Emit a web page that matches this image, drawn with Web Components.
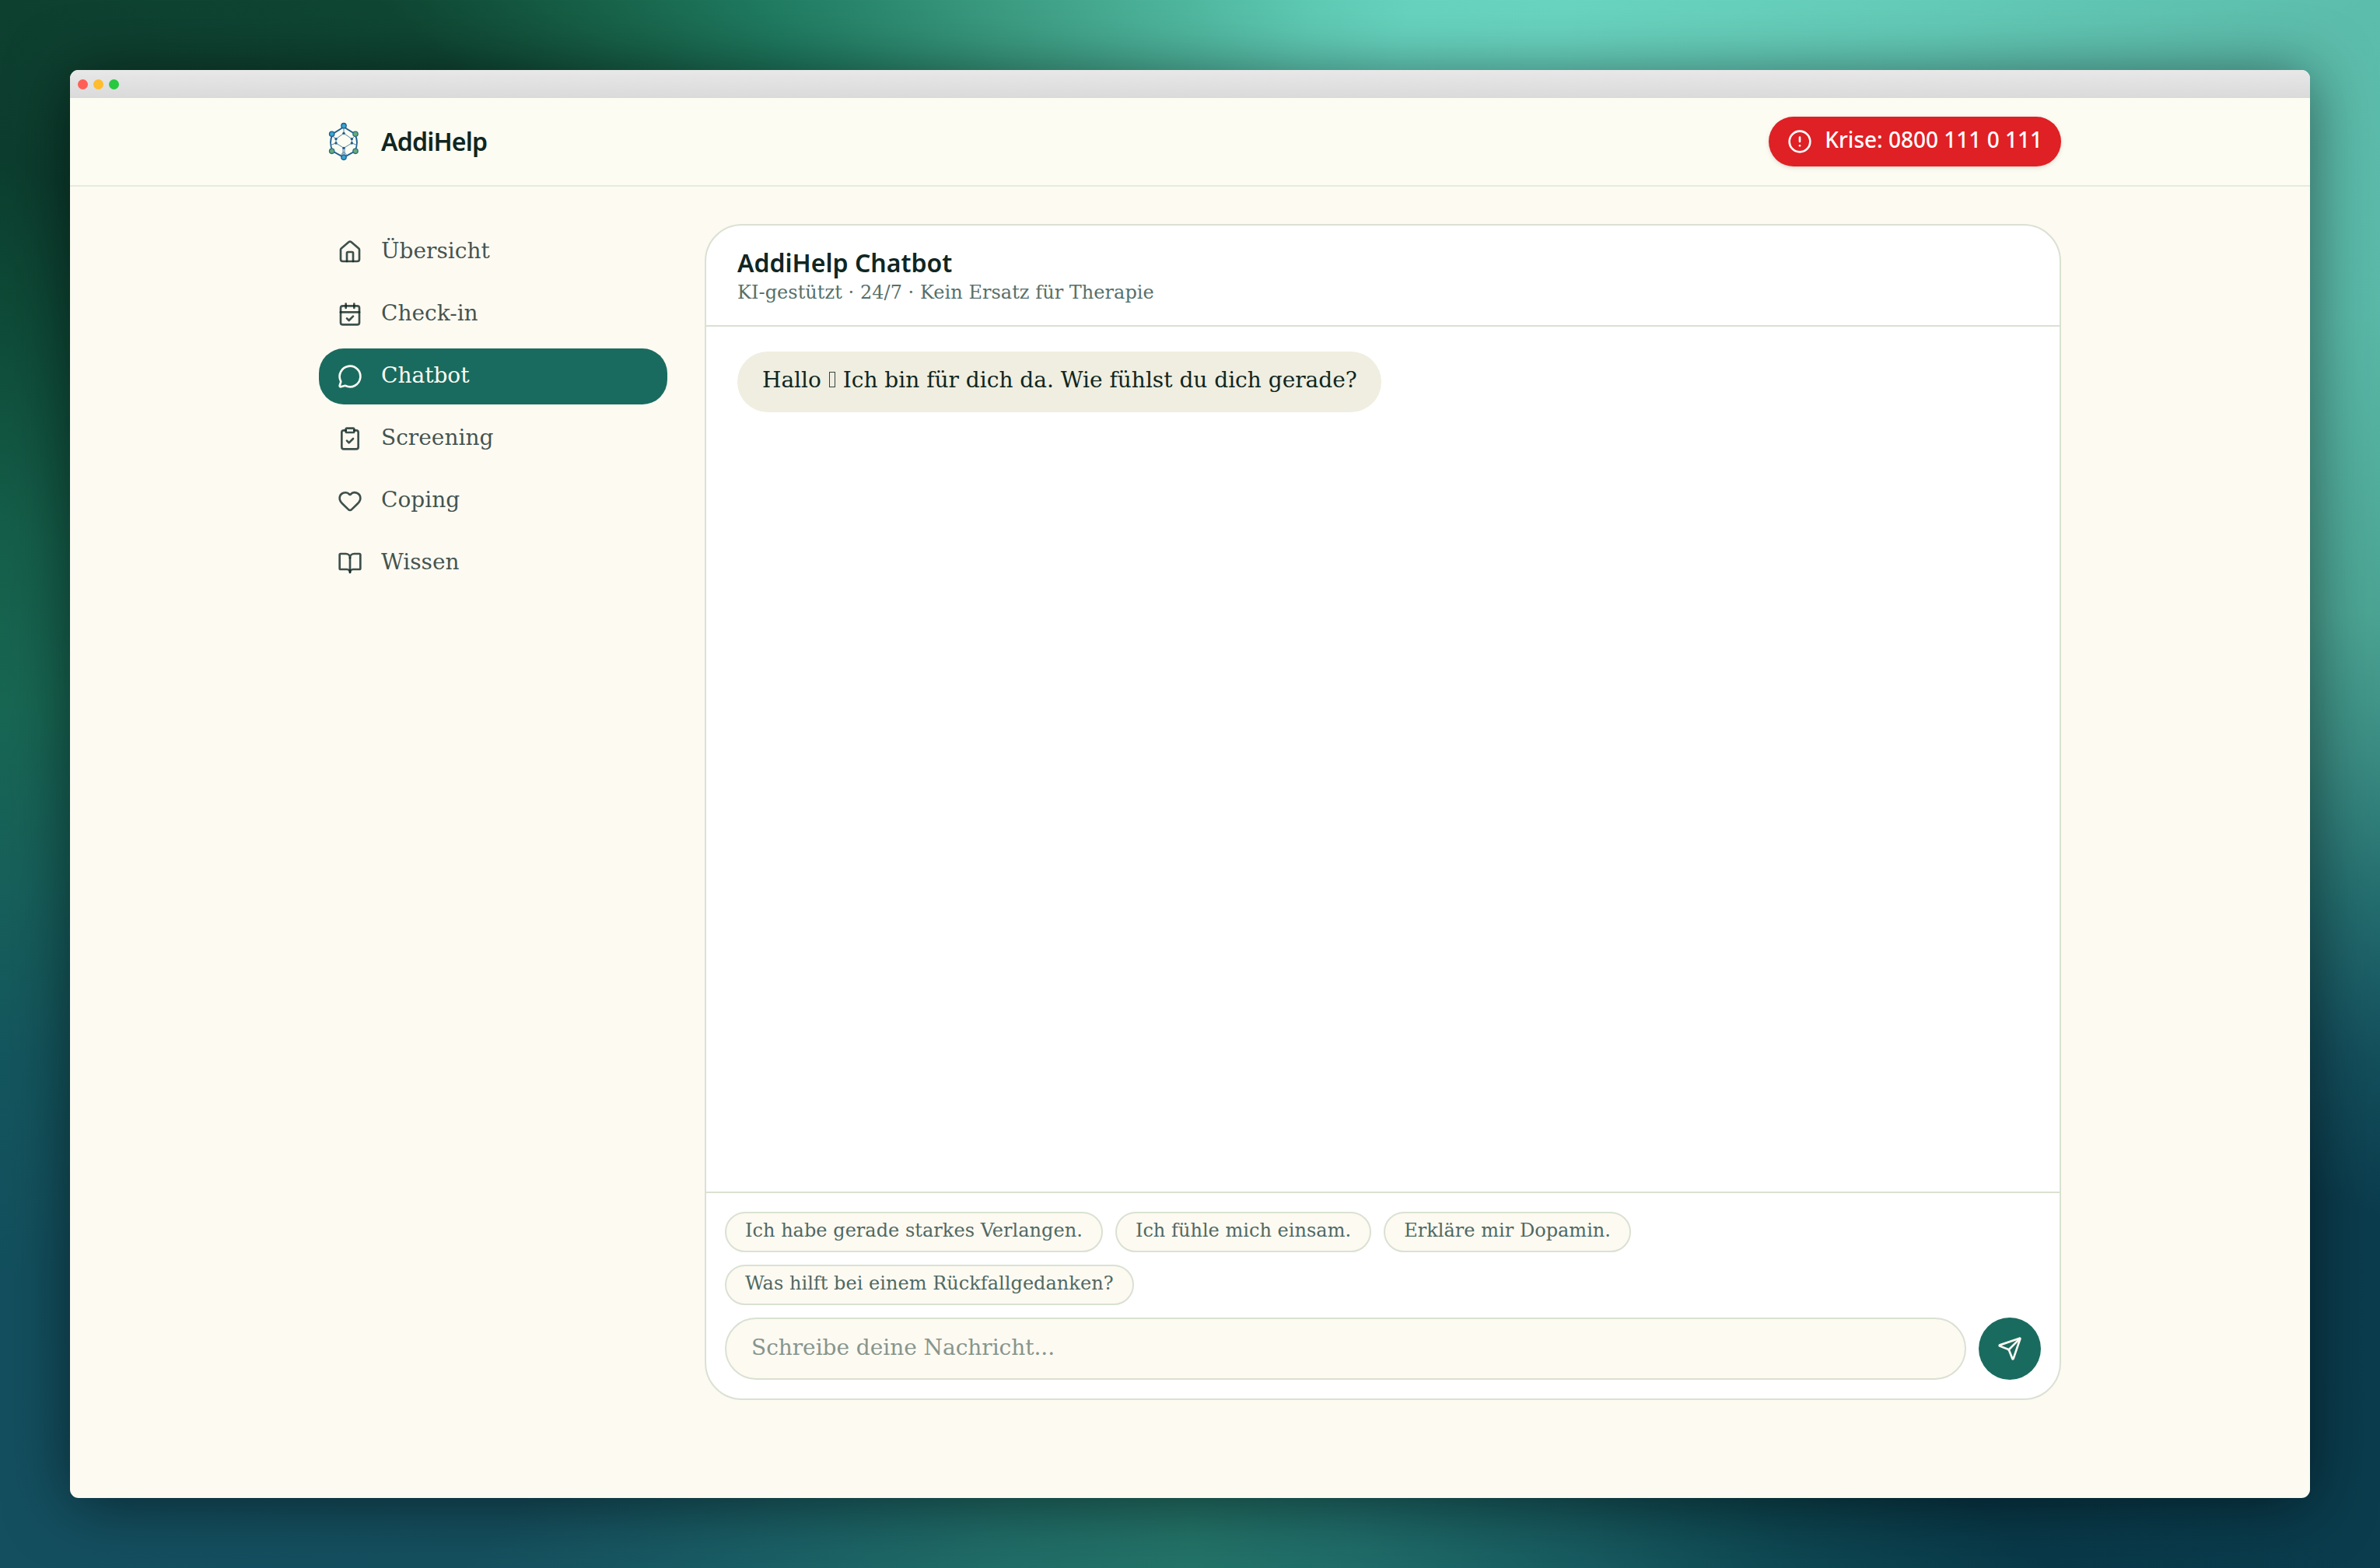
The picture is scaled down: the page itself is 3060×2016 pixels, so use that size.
<!DOCTYPE html>
<html lang="de">
<head>
<meta charset="utf-8">
<title>AddiHelp</title>
<style>
  html, body { margin: 0; height: 100%; }
  body { font-family: "DejaVu Serif", serif; color: #0f2622; }
</style>
</head>
<body>
<desktop-stage>
  <browser-window>
    <app-header>
      <crisis-pill slot="action">Krise: 0800 111 0 111</crisis-pill>
    </app-header>
    <app-main>
      <side-nav slot="nav">
        <nav-item icon="home">Übersicht</nav-item>
        <nav-item icon="calendar">Check-in</nav-item>
        <nav-item icon="message" active>Chatbot</nav-item>
        <nav-item icon="clipboard">Screening</nav-item>
        <nav-item icon="heart">Coping</nav-item>
        <nav-item icon="book">Wissen</nav-item>
      </side-nav>
      <chat-card>
        <span slot="title">AddiHelp Chatbot</span>
        <span slot="subtitle">KI-gestützt · 24/7 · Kein Ersatz für Therapie</span>
        <chat-bubble>Hallo <glyph-box>👋</glyph-box> Ich bin für dich da. Wie fühlst du dich gerade?</chat-bubble>
        <prompt-chip slot="chips">Ich habe gerade starkes Verlangen.</prompt-chip>
        <prompt-chip slot="chips">Ich fühle mich einsam.</prompt-chip>
        <prompt-chip slot="chips">Erkläre mir Dopamin.</prompt-chip>
        <prompt-chip slot="chips">Was hilft bei einem Rückfallgedanken?</prompt-chip>
        <chat-composer slot="composer">Schreibe deine Nachricht...</chat-composer>
      </chat-card>
    </app-main>
  </browser-window>
</desktop-stage>

<script>
const ICONS = {
  home: '<path d="M15 21v-8a1 1 0 0 0-1-1h-4a1 1 0 0 0-1 1v8"/><path d="M3 10a2 2 0 0 1 .709-1.528l7-6a2 2 0 0 1 2.582 0l7 6A2 2 0 0 1 21 10v9a2 2 0 0 1-2 2H5a2 2 0 0 1-2-2z"/>',
  calendar: '<path d="M8 2v4"/><path d="M16 2v4"/><rect width="18" height="18" x="3" y="4" rx="2"/><path d="M3 10h18"/><path d="m9 16 2 2 4-4"/>',
  message: '<path d="M2.992 16.342a2 2 0 0 1 .094 1.167l-1.065 3.29a1 1 0 0 0 1.236 1.168l3.413-.998a2 2 0 0 1 1.099.092 10 10 0 1 0-4.777-4.719"/>',
  clipboard: '<rect width="8" height="4" x="8" y="2" rx="1" ry="1"/><path d="M16 4h2a2 2 0 0 1 2 2v14a2 2 0 0 1-2 2H6a2 2 0 0 1-2-2V6a2 2 0 0 1 2-2h2"/><path d="m9 14 2 2 4-4"/>',
  heart: '<path d="M2 9.5a5.5 5.5 0 0 1 9.591-3.676.56.56 0 0 0 .818 0A5.49 5.49 0 0 1 22 9.5c0 2.29-1.5 4-3 5.5l-5.492 5.313a2 2 0 0 1-3 .019L5 15c-1.5-1.5-3-3.2-3-5.5"/>',
  book: '<path d="M12 7v14"/><path d="M3 18a1 1 0 0 1-1-1V4a1 1 0 0 1 1-1h5a4 4 0 0 1 4 4 4 4 0 0 1 4-4h5a1 1 0 0 1 1 1v13a1 1 0 0 1-1 1h-6a3 3 0 0 0-3 3 3 3 0 0 0-3-3z"/>',
  alert: '<circle cx="12" cy="12" r="10"/><path d="M12 8v4"/><path d="M12 16h.01"/>',
  send: '<path d="M14.536 21.686a.5.5 0 0 0 .937-.024l6.5-19a.496.496 0 0 0-.635-.635l-19 6.5a.5.5 0 0 0-.024.937l7.93 3.18a2 2 0 0 1 1.112 1.11z"/><path d="m21.854 2.147-10.94 10.939"/>'
};
const icon = name => `<svg width="32" height="32" viewBox="0 0 24 24" fill="none" stroke="currentColor" stroke-width="2" stroke-linecap="round" stroke-linejoin="round" aria-hidden="true">${ICONS[name]}</svg>`;

const define = (tag, render) => customElements.define(tag, class extends HTMLElement {
  constructor() { super(); this.attachShadow({ mode: 'open' }); }
  connectedCallback() {
    this.shadowRoot.innerHTML = '<style>*{box-sizing:border-box}:host{box-sizing:border-box}svg{display:block;flex:none}</style>' + render(this);
  }
});

define('desktop-stage', () => `
<style>
  :host { display: flex; width: 3060px; height: 2016px; padding: 90px; overflow: hidden;
    background: conic-gradient(#50b79f 0deg, #5fcab4 9deg, #67d3bf 16deg, #69d4c0 26deg, #67d0bc 35deg, #63cab7 45deg, #5dbdac 56.6deg, #5ab9a8 68deg, #4ca594 81.6deg, #3a8b82 88.8deg, #236c6e 96deg, #144f5c 103deg, #0b3c4d 110deg, #0a3c4d 123.4deg, #093949 132.3deg, #0d4550 141deg, #175a5f 152.7deg, #1f6b69 167deg, #237368 180deg, #206c67 194.6deg, #1a5f65 208.8deg, #154f5e 223deg, #144f60 236.6deg, #134f5e 247deg, #14565e 256.8deg, #17605b 265deg, #186753 274deg, #155f4a 282deg, #0e4a37 292deg, #0c3d2e 298deg, #0e4030 303.4deg, #0f4633 314deg, #176047 322deg, #1f7a60 331.2deg, #3a9a80 345.5deg, #50b79f 360deg); }
</style><slot></slot>`);

define('browser-window', () => `
<style>
  :host { display: flex; flex-direction: column; flex: 1; border-radius: 11px; overflow: hidden; background: #fdfaf2; box-shadow: 0 6px 80px rgba(0,0,0,.52); }
  .bar { display: flex; align-items: center; gap: 7px; height: 36px; padding: 0 10px; background: linear-gradient(#e8e8e8, #dadada); }
  i { width: 13px; height: 13px; border-radius: 50%; background: #ff5f57; }
  i:nth-child(2) { background: #febc2e; }
  i:nth-child(3) { background: #28c840; }
</style>
<div class="bar"><i></i><i></i><i></i></div><slot></slot>`);

define('app-header', () => `
<style>
  :host { display: flex; justify-content: center; height: 114px; border-bottom: 2px solid #e5ebe0; background: #fcfcf2; }
  .inner { display: flex; align-items: center; justify-content: space-between; width: 2304px; padding: 0 32px; }
  .brand { display: flex; align-items: center; gap: 16px; font: 600 32px/48px "Noto Sans", sans-serif; letter-spacing: -.8px; }
</style>
<div class="inner">
  <div class="brand">
    <svg width="64" height="64" viewBox="0 0 192 192" fill="none" stroke="#1d5f8e" aria-hidden="true">
      <path stroke-width="5.5" d="M96 40 54 66Q36 101 54 134L96 157 138 134Q156 101 138 66Z"/>
      <path stroke-width="2.6" stroke="#3b7199" d="M96 64 127 86V102L96 121 66 102V86ZM96 64V40M66 86 50 72M127 86 141 72M66 102 46 109M127 102 146 109M93 121V150M99 121V150M84 148 96 136 108 148"/>
      <g fill="#1d5f8e" stroke="none"><circle cx="96" cy="64" r="5"/><circle cx="66" cy="86" r="5"/><circle cx="127" cy="86" r="5"/><circle cx="66" cy="102" r="5"/><circle cx="127" cy="102" r="5"/><circle cx="96" cy="121" r="5"/></g>
      <g fill="#39a4d4" stroke-width="4"><circle cx="96" cy="35" r="9.5"/><circle cx="50" cy="67" r="9.5"/><circle cx="96" cy="157" r="9.5"/></g>
      <g fill="#67ac78" stroke="#2b6f86" stroke-width="4"><circle cx="141" cy="67" r="9.5"/><circle cx="50" cy="133" r="9.5"/><circle cx="141" cy="133" r="9.5"/></g>
    </svg>
    <span>AddiHelp</span>
  </div>
  <slot name="action"></slot>
</div>`);

define('crisis-pill', () => `
<style>
  :host { display: flex; align-items: center; gap: 16px; height: 64px; padding: 0 24px; border-radius: 32px; background: #df2025; color: #fff; font: 500 28px/40px "Noto Sans", sans-serif; box-shadow: 0 2px 6px rgba(0,0,0,.1), 0 2px 4px -2px rgba(0,0,0,.1); white-space: nowrap; }
  span { padding-bottom: 6px; }
</style>${icon('alert')}<span><slot></slot></span>`);

define('app-main', () => `
<style>
  :host { display: flex; justify-content: center; }
  .inner { display: grid; grid-template-columns: 448px 1fr; gap: 48px; width: 2304px; padding: 48px 32px; align-items: start; }
</style><div class="inner"><slot name="nav"></slot><slot></slot></div>`);

define('side-nav', () => `<style>:host { display: flex; flex-direction: column; gap: 8px; }</style><slot></slot>`);

define('nav-item', el => `
<style>
  :host { display: flex; align-items: center; gap: 24px; height: 72px; padding: 0 24px; border-radius: 32px; font-size: 28px; line-height: 40px; color: rgba(15,38,34,.8); }
  :host([active]) { background: #1a6b5f; color: #fdfbf3; }
  span { padding-bottom: 2px; }
</style>${icon(el.getAttribute('icon'))}<span><slot></slot></span>`);

define('chat-card', () => `
<style>
  :host { display: flex; flex-direction: column; height: 1512px; border: 2px solid #dae1d2; border-radius: 48px; background: #fff; overflow: hidden; }
  header { display: flex; flex-direction: column; height: 130px; padding: 32px 40px 0; border-bottom: 2px solid #dae1d2; }
  .title { height: 38px; font: 600 32px/32px "Noto Sans", sans-serif; }
  .sub { font-size: 24px; line-height: 32px; letter-spacing: .04px; color: #56706a; }
  .log { flex: 1; display: flex; flex-direction: column; align-items: flex-start; padding: 32px 40px; }
  footer { display: flex; flex-direction: column; gap: 16px; padding: 24px; border-top: 2px solid #dae1d2; }
  .chips { display: flex; flex-wrap: wrap; gap: 16px; width: 1300px; }
</style>
<header><div class="title"><slot name="title"></slot></div><div class="sub"><slot name="subtitle"></slot></div></header>
<div class="log"><slot></slot></div>
<footer><div class="chips"><slot name="chips"></slot></div><slot name="composer"></slot></footer>`);

define('chat-bubble', () => `
<style>:host { display: block; height: 78px; padding: 14px 31px 14px 32px; border-radius: 40px; background: #f0eee0; font-size: 28px; line-height: 45px; white-space: nowrap; }</style><slot></slot>`);

/* Hollow placeholder box shown in place of an emoji */
define('glyph-box', () => `
<style>:host { display: inline-block; width: 8px; height: 20px; margin: 0 1px; border: 1px solid #33453f; overflow: hidden; color: transparent; font-size: 6px; line-height: 18px; }</style><slot></slot>`);

define('prompt-chip', () => `
<style>:host { display: block; height: 52px; padding: 6px 24px; border: 2px solid #dae1d2; border-radius: 26px; background: #fdfaf2; color: #4f6963; font-size: 24px; line-height: 32px; letter-spacing: .03px; white-space: nowrap; }</style><slot></slot>`);

define('chat-composer', () => `
<style>
  :host { display: flex; gap: 16px; }
  .field { flex: 1; display: flex; align-items: center; height: 80px; padding: 0 32px 3px; border: 2px solid #dae1d2; border-radius: 40px; background: #fdfaf2; color: #87958d; font-size: 28px; letter-spacing: -.04px; }
  .send { display: flex; align-items: center; justify-content: center; width: 80px; height: 80px; border-radius: 50%; background: #1a6b5f; color: #fdfbf3; }
</style>
<div class="field"><slot></slot></div><div class="send">${icon('send')}</div>`);
</script>
</body>
</html>
